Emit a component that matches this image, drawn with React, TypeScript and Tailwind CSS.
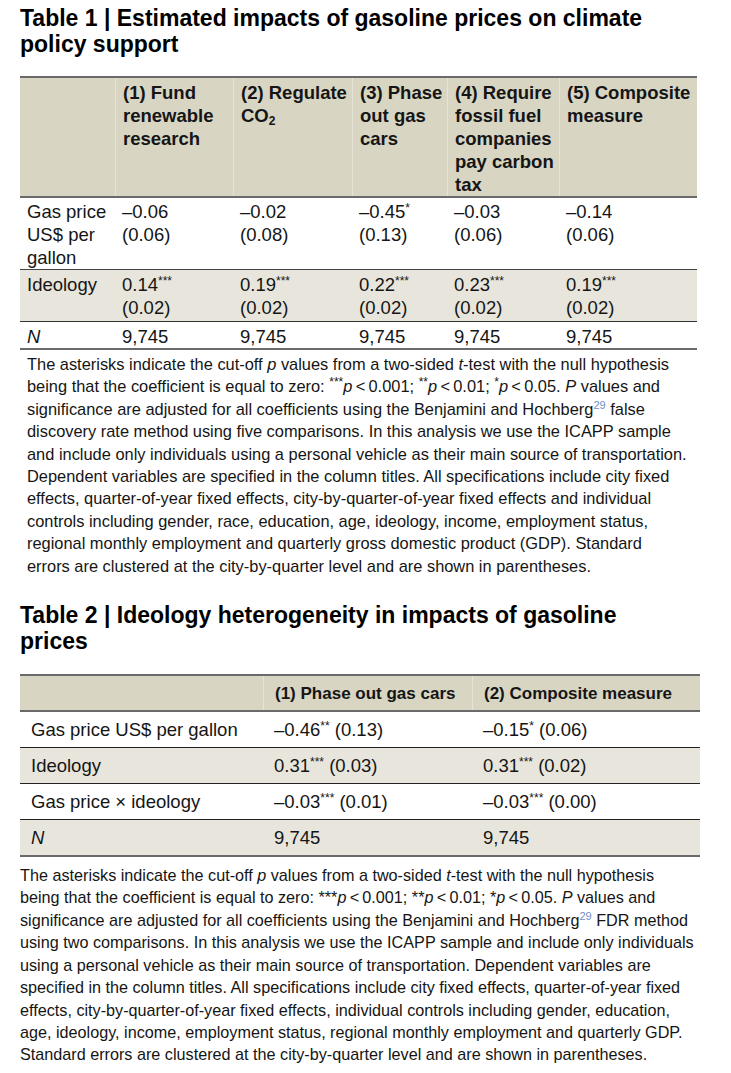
const Sup = ({ children }: { children: React.ReactNode }) => (
  <sup className="text-[12px]">{children}</sup>
);

const Ref = ({ children }: { children: React.ReactNode }) => (
  <sup className="text-[11px] text-[#6f8fc6]">{children}</sup>
);

const P = () => <i>p</i>;

const t1Cols = "grid grid-cols-[95px_118px_119px_95px_112px_138px]";
const t2Cols = "grid grid-cols-[243px_209px_228px]";

const t1Head = [
  ["(1) Fund", "renewable", "research"],
  ["(2) Regulate", "CO₂"],
  ["(3) Phase", "out gas", "cars"],
  ["(4) Require", "fossil fuel", "companies", "pay carbon", "tax"],
  ["(5) Composite", "measure"],
];

const t1Gas = [
  ["–0.06", "", "(0.06)"],
  ["–0.02", "", "(0.08)"],
  ["–0.45", "*", "(0.13)"],
  ["–0.03", "", "(0.06)"],
  ["–0.14", "", "(0.06)"],
];

const t1Ideo = [
  ["0.14", "***", "(0.02)"],
  ["0.19", "***", "(0.02)"],
  ["0.22", "***", "(0.02)"],
  ["0.23", "***", "(0.02)"],
  ["0.19", "***", "(0.02)"],
];

const t2Rows = [
  { label: "Gas price US$ per gallon", a: ["–0.46", "**", "(0.13)"], b: ["–0.15", "*", "(0.06)"], bg: "bg-white" },
  { label: "Ideology", a: ["0.31", "***", "(0.03)"], b: ["0.31", "***", "(0.02)"], bg: "bg-[#e8e6dc]" },
  { label: "Gas price × ideology", a: ["–0.03", "***", "(0.01)"], b: ["–0.03", "***", "(0.00)"], bg: "bg-white" },
];

function Table1() {
  return (
    <div className="mt-[19px] w-[677px] text-[18.5px] leading-[23px]">
      {/* header */}
      <div className={`${t1Cols} bg-[#d8d5c3] border-t-2 border-b-2 border-[#6a6a6a] font-bold`}>
        <div className="pt-[3px] pl-[7px]" />
        {t1Head.map((lines, i) => (
          <div key={i} className="pt-[3px] pl-[7px] border-l border-[#e6e3d7]">
            {lines.map((l, j) =>
              l === "CO₂" ? (
                <div key={j}>
                  CO<sub className="text-[12px]">2</sub>
                </div>
              ) : (
                <div key={j}>{l}</div>
              )
            )}
          </div>
        ))}
      </div>

      {/* gas price */}
      <div className={`${t1Cols} border-b border-[#444]`}>
        <div className="pt-[2px] pl-[7px]">
          Gas price
          <br />
          US$ per
          <br />
          gallon
        </div>
        {t1Gas.map(([v, s, se], i) => (
          <div key={i} className="pt-[2px] pl-[7px]">
            {v}
            {s && <Sup>{s}</Sup>}
            <br />
            {se}
          </div>
        ))}
      </div>

      {/* ideology */}
      <div className={`${t1Cols} bg-[#e8e6dc] border-b border-[#333]`}>
        <div className="pt-[3px] pb-[2px] pl-[7px]">Ideology</div>
        {t1Ideo.map(([v, s, se], i) => (
          <div key={i} className="pt-[3px] pb-[2px] pl-[7px]">
            {v}
            <Sup>{s}</Sup>
            <br />
            {se}
          </div>
        ))}
      </div>

      {/* N */}
      <div className={`${t1Cols} border-b-2 border-[#6a6a6a]`}>
        <div className="pt-[3px] pl-[7px] italic">N</div>
        {Array.from({ length: 5 }).map((_, i) => (
          <div key={i} className="pt-[3px] pl-[7px]">
            9,745
          </div>
        ))}
      </div>
    </div>
  );
}

function Table2() {
  return (
    <div className="mt-[20px] w-[680px] text-[18.5px] leading-[23px]">
      <div className={`${t2Cols} bg-[#d8d5c3] border-t-2 border-b-2 border-[#6a6a6a] font-bold text-[17px]`}>
        <div className="pt-[6px] pb-[5px] pl-[11px]" />
        <div className="pt-[6px] pb-[5px] pl-[11px] border-l border-[#e6e3d7]">(1) Phase out gas cars</div>
        <div className="pt-[6px] pb-[5px] pl-[11px] border-l border-[#e6e3d7]">(2) Composite measure</div>
      </div>
      {t2Rows.map((r) => (
        <div key={r.label} className={`${t2Cols} ${r.bg} border-b border-[#222]`}>
          <div className="py-[6px] pl-[11px]">{r.label}</div>
          <div className="py-[6px] pl-[11px]">
            {r.a[0]}
            <Sup>{r.a[1]}</Sup> {r.a[2]}
          </div>
          <div className="py-[6px] pl-[11px]">
            {r.b[0]}
            <Sup>{r.b[1]}</Sup> {r.b[2]}
          </div>
        </div>
      ))}
      <div className={`${t2Cols} bg-[#e8e6dc] border-b-2 border-[#6a6a6a]`}>
        <div className="py-[6px] pl-[11px] italic">N</div>
        <div className="py-[6px] pl-[11px]">9,745</div>
        <div className="py-[6px] pl-[11px]">9,745</div>
      </div>
    </div>
  );
}

export default function App() {
  return (
    <div className="w-[731px] min-h-[1073px] bg-white font-['Liberation_Sans',Arial,sans-serif] text-[#151515]">
      <div className="pl-[20px] pt-[5px]">
        <h2 className="text-[23px] font-bold leading-[26px] text-black">
          Table 1 | Estimated impacts of gasoline prices on climate
          <br />
          policy support
        </h2>

        <Table1 />

        <div className="pt-[3px] pl-[7px] text-[16.4px] leading-[22.4px] whitespace-nowrap">
          <div>
            The asterisks indicate the cut-off <P /> values from a two-sided <i>t</i>-test with the null hypothesis
          </div>
          <div>
            being that the coefficient is equal to zero: <Sup>***</Sup>
            <P />
            {"\u2009<\u20090.001; "}
            <Sup>**</Sup>
            <P />
            {"\u2009<\u20090.01; "}
            <Sup>*</Sup>
            <P />
            {"\u2009<\u20090.05. "}
            <i>P</i> values and
          </div>
          <div>
            significance are adjusted for all coefficients using the Benjamini and Hochberg<Ref>29</Ref> false
          </div>
          <div>discovery rate method using five comparisons. In this analysis we use the ICAPP sample</div>
          <div>and include only individuals using a personal vehicle as their main source of transportation.</div>
          <div>Dependent variables are specified in the column titles. All specifications include city fixed</div>
          <div>effects, quarter-of-year fixed effects, city-by-quarter-of-year fixed effects and individual</div>
          <div>controls including gender, race, education, age, ideology, income, employment status,</div>
          <div>regional monthly employment and quarterly gross domestic product (GDP). Standard</div>
          <div>errors are clustered at the city-by-quarter level and are shown in parentheses.</div>
        </div>

        <h2 className="mt-[25px] text-[23px] font-bold leading-[26px] text-black">
          Table 2 | Ideology heterogeneity in impacts of gasoline
          <br />
          prices
        </h2>

        <Table2 />

        <div className="pt-[7px] text-[16.2px] leading-[22.4px] whitespace-nowrap">
          <div>
            The asterisks indicate the cut-off <P /> values from a two-sided <i>t</i>-test with the null hypothesis
          </div>
          <div>
            being that the coefficient is equal to zero: ***<P />
            {"\u2009<\u20090.001; **"}
            <P />
            {"\u2009<\u20090.01; *"}
            <P />
            {"\u2009<\u20090.05. "}
            <i>P</i> values and
          </div>
          <div>
            significance are adjusted for all coefficients using the Benjamini and Hochberg<Ref>29</Ref> FDR method
          </div>
          <div>using two comparisons. In this analysis we use the ICAPP sample and include only individuals</div>
          <div>using a personal vehicle as their main source of transportation. Dependent variables are</div>
          <div>specified in the column titles. All specifications include city fixed effects, quarter-of-year fixed</div>
          <div>effects, city-by-quarter-of-year fixed effects, individual controls including gender, education,</div>
          <div>age, ideology, income, employment status, regional monthly employment and quarterly GDP.</div>
          <div>Standard errors are clustered at the city-by-quarter level and are shown in parentheses.</div>
        </div>
      </div>
    </div>
  );
}
